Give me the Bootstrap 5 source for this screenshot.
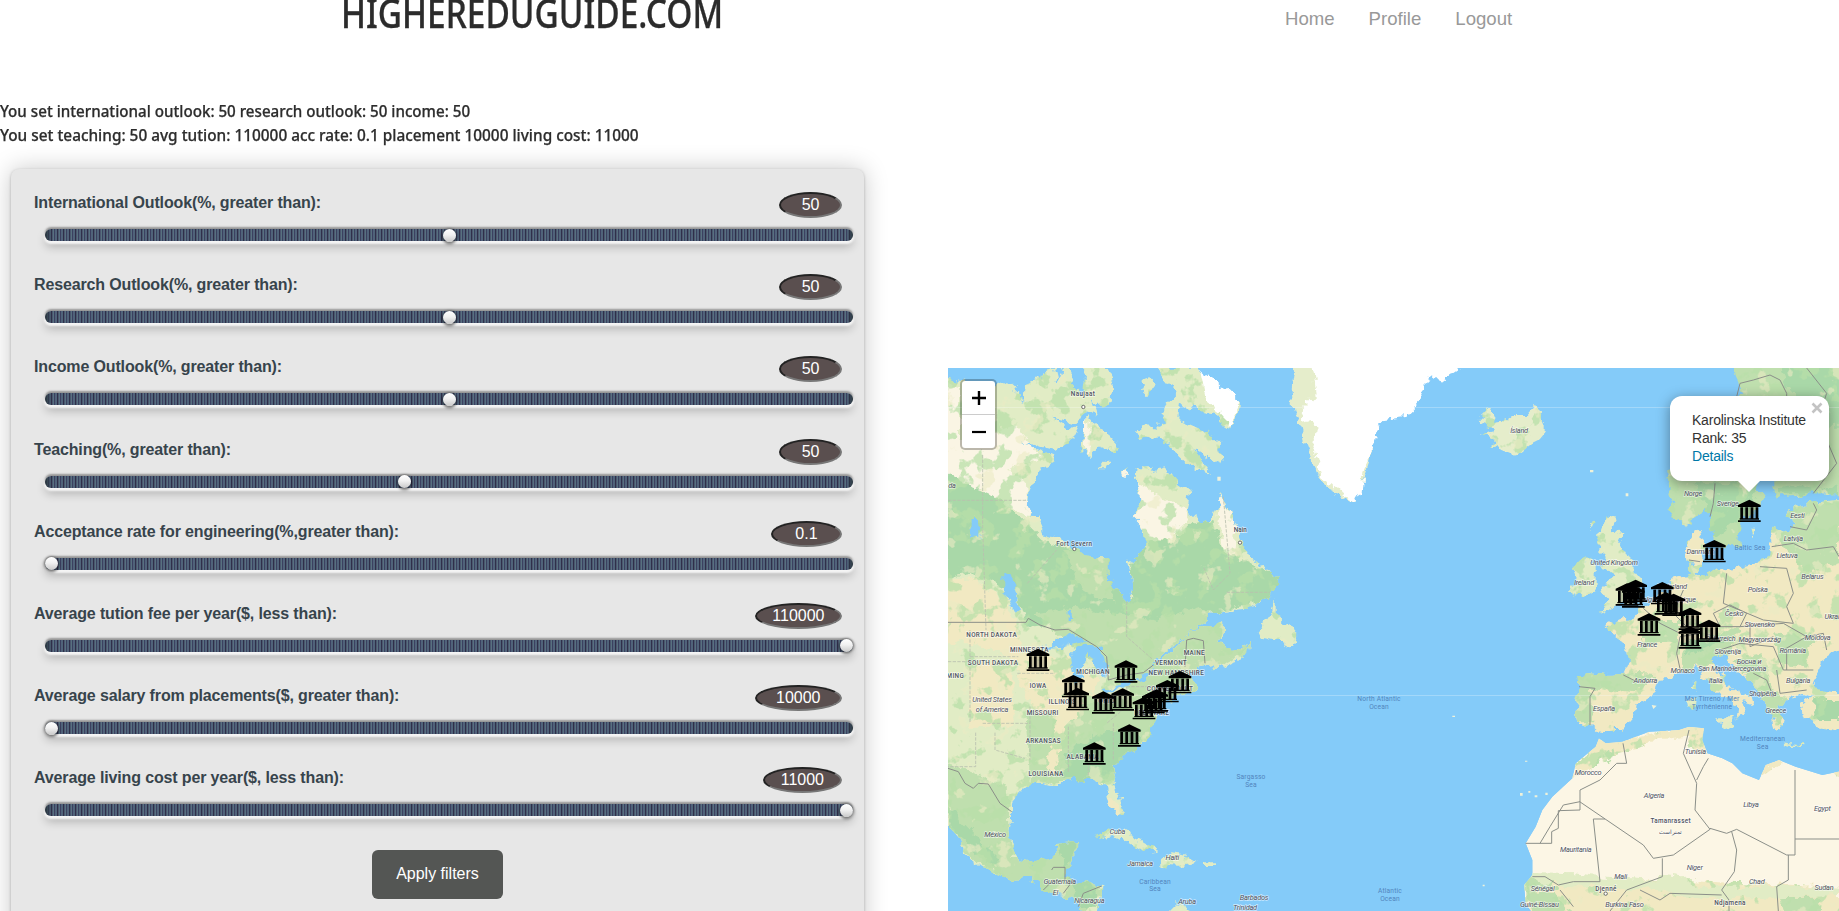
<!DOCTYPE html>
<html lang="en">
<head>
<meta charset="utf-8">
<meta name="viewport" content="width=device-width, initial-scale=1">
<title>HigherEduGuide.com</title>
<link href="https://cdn.jsdelivr.net/npm/bootstrap@5.3.0/dist/css/bootstrap.min.css" rel="stylesheet">
<style>
body{font-family:"Liberation Sans",Arial,sans-serif;color:#2d2d2d;background:#fff;overflow:hidden;height:911px}
.site-head{height:97px;padding-left:341px}
.brand{font:500 39px/56px "Noto Sans","Open Sans",sans-serif;width:382px;margin-top:-15px;white-space:nowrap;color:#2b2b2b;-webkit-text-stroke:.3px #2b2b2b}
.brand span,.status span{display:inline-block;transform-origin:0 50%;white-space:nowrap}
.main-nav{margin-left:562px;gap:34px;padding-top:5px;font-size:18.600px;line-height:27px}
.main-nav a{color:#999;text-decoration:none}
.status{font:500 16px/24px "Noto Sans","Open Sans",sans-serif;height:72px;padding-top:2px;-webkit-text-stroke:.25px #2d2d2d}
.filters{width:853px;height:780px;margin-left:11px;background:#e7e7e7;border-radius:8px;box-shadow:0 0 24px rgba(0,0,0,.22),0 1px 3px rgba(0,0,0,.25);padding:22px 11px 0 23px}
.filter-item{height:82.2px}
.filter-item label{font-weight:700;font-size:16px;line-height:24px;color:#37444c;letter-spacing:-.14px}
.val{background:#5a4f4f;color:#fff;border:2px inset #777;border-radius:50%;height:26px;line-height:22px;font-size:16px;padding:0 20.5px;margin-right:11px;margin-top:1px}
.slide{appearance:none;-webkit-appearance:none;display:block;width:808px;height:12px;margin:11px 0 0 11px;border-radius:6px;outline:0;
background:linear-gradient(90deg,#26323b,transparent 7px,transparent 802px,#26323b),repeating-linear-gradient(90deg,#2f3049 0 1px,#4b5770 1px 2px,#57717f 2px 3px,#3b4060 3px 4px,#50637a 4px 6px);
box-shadow:0 -2px 2px rgba(0,0,0,.35),0 2px 2px 1px #f5f5f5,0 6px 10px rgba(0,0,0,.22)}
.slide::-webkit-slider-thumb{-webkit-appearance:none;width:13px;height:13px;border-radius:50%;background:linear-gradient(#fff,#f1f1f1 45%,#c9c9c9);box-shadow:0 1px 3px 1px rgba(0,0,0,.55)}
.apply{width:131px;height:49px;background:#545654;color:#fff;border-radius:6px;border:0;font-size:16px;margin:1px 0 0 338px}
.map-box{width:891px;height:543px;margin:271px 0 0 84px;overflow:hidden;background:#84cbf9}
.zoomer{left:12px;top:11px;width:37px;border:2px solid rgba(0,0,0,.25);border-radius:5px;background:#fff;background-clip:padding-box}
.zoomer span{height:33px;display:flex;align-items:center;justify-content:center}
.zoomer span+span{border-top:1px solid #ccc;height:34px}
.pop{left:722px;top:28px;width:159px;height:85px;border-radius:12px;background:#fff;box-shadow:0 3px 14px rgba(0,0,0,.4);padding:15px 0 0 22px;font-size:14px;line-height:18px;color:#333;white-space:nowrap;letter-spacing:-.22px}
.pop a{color:#0078a8;text-decoration:none}
.pop::after{content:"";position:absolute;left:67px;top:84px;border:12px solid transparent;border-top-color:#fff;border-bottom:0}
.pop svg{right:6px;top:6px}
.map-box text{font-family:Roboto,sans-serif;text-anchor:middle;paint-order:stroke;stroke:#fff;stroke-opacity:.6;stroke-width:4px;fill:#4f5260}
.map-box .ctry text{font-size:22px;font-style:italic;font-weight:400;letter-spacing:-.7px}
.st{font-size:19px;letter-spacing:1px;font-weight:500}
.map-box .sea text{fill:#5285bd;stroke:none;font-size:20px;letter-spacing:.5px}
.bd{fill:none;stroke:#8b8f89;stroke-width:3}
.bd2{fill:none;stroke:#b9bfae;stroke-width:2.5;stroke-dasharray:10 4}
</style>
</head>
<body>
<header class="site-head d-flex align-items-start">
<div class="brand"><span id="brand">HIGHEREDUGUIDE.COM</span></div>
<nav class="main-nav d-flex"><a href="#">Home</a><a href="#">Profile</a><a href="#">Logout</a></nav>
</header>
<main class="d-flex align-items-start">
<section>
<div class="status"><div><span id="s1">You set international outlook: 50 research outlook: 50 income: 50</span></div><div><span id="s2">You set teaching: 50 avg tution: 110000 acc rate: 0.1 placement 10000 living cost: 11000</span></div></div>
<form class="filters">
<div class="filter-item"><div class="d-flex justify-content-between"><label>International Outlook(%, greater than):</label><span class="val">50</span></div><input class="slide" type="range" value="50"></div>
<div class="filter-item"><div class="d-flex justify-content-between"><label>Research Outlook(%, greater than):</label><span class="val">50</span></div><input class="slide" type="range" value="50"></div>
<div class="filter-item"><div class="d-flex justify-content-between"><label>Income Outlook(%, greater than):</label><span class="val">50</span></div><input class="slide" type="range" value="50"></div>
<div class="filter-item"><div class="d-flex justify-content-between"><label>Teaching(%, greater than):</label><span class="val">50</span></div><input class="slide" type="range" max="90" value="40"></div>
<div class="filter-item"><div class="d-flex justify-content-between"><label>Acceptance rate for engineering(%,greater than):</label><span class="val" style="padding:0 22.400px">0.1</span></div><input class="slide" type="range" value="0"></div>
<div class="filter-item"><div class="d-flex justify-content-between"><label>Average tution fee per year($, less than):</label><span class="val" style="padding:0 15.5px">110000</span></div><input class="slide" type="range" value="100"></div>
<div class="filter-item"><div class="d-flex justify-content-between"><label>Average salary from placements($, greater than):</label><span class="val" style="padding:0 19.500px">10000</span></div><input class="slide" type="range" value="0"></div>
<div class="filter-item"><div class="d-flex justify-content-between"><label>Average living cost per year($, less than):</label><span class="val" style="padding:0 16px">11000</span></div><input class="slide" type="range" value="100"></div>
<button class="apply" type="button">Apply filters</button>
</form>
</section>
<section class="map-box position-relative">
<svg width="891" height="543" viewBox="24 24 2673 1629" class="d-block">
<defs>
<filter id="rough" filterUnits="userSpaceOnUse" x="0" y="0" width="2720" height="1680" color-interpolation-filters="sRGB">
<feTurbulence type="fractalNoise" baseFrequency=".035" numOctaves="3" seed="4" result="n"/>
<feDisplacementMap in="SourceGraphic" in2="n" scale="36" xChannelSelector="R" yChannelSelector="G"/>
</filter>
<filter id="veg" filterUnits="userSpaceOnUse" x="0" y="0" width="2720" height="1680" color-interpolation-filters="sRGB">
<feTurbulence type="fractalNoise" baseFrequency=".035" numOctaves="3" seed="4" result="n"/>
<feDisplacementMap in="SourceGraphic" in2="n" scale="36" xChannelSelector="R" yChannelSelector="G" result="d"/>
<feTurbulence type="fractalNoise" baseFrequency=".018" numOctaves="4" seed="9" result="t"/>
<feColorMatrix in="t" values="0 0 0 0 .72  0 0 0 0 .875  0 0 0 0 .66  14 0 0 0 -7.9" result="g0"/>
<feComponentTransfer in="g0" result="g"><feFuncA type="linear" slope=".75"/></feComponentTransfer>
<feComposite in="g" in2="d" operator="atop" result="x"/>
<feColorMatrix in="t" values="0 0 0 0 .92  0 0 0 0 .92  0 0 0 0 .77  0 14 0 0 -9" result="s0"/>
<feComponentTransfer in="s0" result="s"><feFuncA type="linear" slope=".6"/></feComponentTransfer>
<feComposite in="s" in2="x" operator="atop"/>
</filter>
<clipPath id="na"><path d="M0 50L60 60 100 75 160 85 200 65 240 100 250 125 255 70 300 50 345 20 352 75 365 25 388 20 400 80 425 105 437 20 500 20 520 60 522 100 500 130 480 145 455 120 470 165 432 150 410 195 350 175 333 170 380 200 413 205 400 230 380 255 350 270 242 245 345 288 340 305 310 320 285 360 268 400 263 440 275 470 295 475 305 520 340 525 395 560 430 585 490 592 505 605 507 660 530 690 560 725 575 710 580 680 570 640 560 610 600 590 615 560 612 520 600 490 580 470 600 440 595 390 587 350 590 325 630 325 650 335 670 325 700 355 710 370 750 390 745 430 740 450 770 475 790 490 815 475 830 440 842 405 870 460 890 500 905 540 925 590 960 610 1000 640 1012 660 1010 690 980 715 935 745 880 750 820 755 790 785 730 835 690 865 640 915 600 940 650 915 710 855 770 805 850 785 848 820 835 850 880 870 930 850 925 875 880 905 820 937 815 912 780 920 750 940 760 955 775 985 740 998 690 1020 655 1040 642 1080 630 1130 600 1160 560 1180 530 1215 522 1250 530 1280 545 1320 545 1362 530 1365 510 1340 500 1310 495 1280 470 1255 430 1260 400 1250 360 1275 330 1275 290 1265 260 1275 225 1305 210 1340 210 1380 205 1420 215 1460 240 1500 280 1510 320 1500 345 1485 350 1455 390 1450 417 1450 405 1480 395 1510 380 1530 375 1550 400 1560 440 1565 487 1578 485 1610 475 1660 430 1660 400 1610 350 1605 310 1585 270 1555 220 1560 170 1545 120 1520 70 1480 60 1440 0 1375Z"/></clipPath>
<clipPath id="af"><path id="afp" d="M1977 1135L1997 1150 2047 1145 2127 1115 2217 1110 2247 1100 2292 1105 2287 1140 2302 1180 2347 1195 2377 1210 2407 1240 2457 1260 2477 1215 2517 1200 2567 1220 2647 1245 2720 1230V1680H1792L1757 1630 1752 1575 1777 1545 1777 1500 1757 1450 1787 1400 1807 1350 1837 1310 1897 1255 1907 1210 1967 1160Z"/></clipPath>
<clipPath id="eu"><path d="M2720 415L2620 425 2560 440 2540 460 2560 490 2550 520 2515 505 2500 520 2490 545 2495 580 2470 600 2427 615 2357 635 2330 622 2300 645 2272 640 2290 600 2292 545 2282 510 2257 525 2242 550 2247 600 2257 640 2197 655 2187 690 2147 715 2107 740 2082 770 2052 775 1997 800 2002 815 2047 840 2062 870 2067 910 2052 943 1997 945 1937 938 1912 950 1917 980 1907 1060 1917 1100 1952 1100 1977 1122 2007 1110 2047 1110 2077 1075 2087 1035 2147 995 2157 950 2207 945 2237 930 2277 925 2287 950 2327 990 2377 1025 2397 1055 2392 1082 2417 1050 2407 1025 2437 1035 2432 1015 2367 980 2332 930 2322 895 2347 885 2377 920 2427 960 2457 990 2467 1025 2497 1070 2502 1100 2522 1110 2537 1085 2512 1045 2547 1010 2587 1005 2617 1010 2587 1030 2597 1075 2627 1100 2720 1115V1000L2637 990 2617 965 2632 940 2647 900 2720 850Z"/></clipPath>
<g id="uni"><path d="M0-34L34-18V-12H-34V-18ZM-27-11H-19V23H-27ZM-12-11H-4V23H-12ZM4-11H12V23H4ZM19-11H27V23H19ZM-29 22H29V26H-29ZM-34 28H34V33H-34Z"/><path d="M-26-12H26V24H-26Z" opacity=".18"/></g>
</defs>
<!-- North America -->
<g filter="url(#veg)"><g clip-path="url(#na)">
<path fill="#e1ecc5" d="M0 0H1100V1680H0Z"/>
<path fill="#faf5e4" d="M0 230L100 250 230 195 280 260 300 290 200 330 260 370 270 470 150 410 0 370ZM0 60L60 80 60 240 0 240ZM590 370L650 400 740 450 740 490 690 540 615 540 570 470ZM835 400L890 500 880 600 850 580 830 470Z"/>
<path fill="#a9d8a8" d="M0 320L60 365 130 390 200 440 250 480 310 540 400 570 520 600 540 700 580 720 570 610 630 540 700 545 760 490 820 480 850 580 890 590 1020 650 1000 720 800 760 640 900 560 850 480 820 400 790 260 800 230 700 100 640 0 660Z"/>
<path fill="#bfdfae" d="M370 570L500 590 520 720 480 720 420 680ZM280 760L400 740 650 780 780 740 860 800 940 850 820 940 750 1000 640 1060 450 900ZM260 1060L640 1000 650 1120 540 1200 520 1260 270 1270ZM0 1200L200 1280 210 1500 420 1440 490 1600 430 1660 200 1560 60 1470Z"/>
<path fill="#f1e9c2" d="M0 660L95 655 200 720 235 810 250 880 400 900 480 960 450 1010 380 1090 340 1250 320 1250 350 1080 270 1040 220 900 100 850 0 850ZM490 1320L510 1310 545 1350 530 1365ZM90 910H220V1100H90Z"/>
<path fill="#a9d8a8" d="M380 1180L500 1110 600 1110 600 1160 520 1230 480 1270 370 1250ZM24 1340L120 1440 180 1500 160 1520 24 1400ZM350 1450L410 1450 380 1540 470 1580 480 1640 420 1640Z"/></g>
<g fill="#e1ecc5"><path d="M440 170L455 190 510 230 540 265 525 278 480 262 450 292 435 270 412 272 430 240ZM650 20H770L830 80 870 105 905 130 885 175 865 208 835 190 830 160 780 150 760 130 740 150 720 120 715 180 740 190 800 215 820 225 840 260 845 310 800 290 765 270 815 345 740 310 690 260 650 225 600 240 585 215 610 195 660 200 675 190 660 160 705 105 690 70ZM605 60L630 50 645 70 635 95 620 105 605 90ZM475 325L490 305 510 305 500 325ZM1010 715L985 770 950 815 960 835 1010 845 1060 860 1072 830 1060 800 1030 785 1010 765ZM465 1435L500 1412 550 1415 600 1440 655 1472 610 1475 570 1450 520 1425ZM660 1515L690 1480 735 1485 770 1505 710 1520ZM575 1508H630V1518H575ZM795 1507H825V1518H795ZM680 1660L710 1630 770 1660Z"/></g>
<path fill="#faf5e4" d="M545 335L560 325 562 345 552 355ZM435 180L455 200 450 290 435 265Z"/>
</g>
<g filter="url(#rough)">
<path fill="#84cbf9" d="M390 890L430 850 480 860 500 920 490 960 470 920 440 870 425 960 405 980ZM490 990L600 950 640 925 640 945 560 975 500 1000ZM190 640L215 650 240 740 225 760 190 690ZM380 750H395V780H380ZM300 865L400 820 440 840 370 860ZM95 480H115V530H95Z"/>
<path fill="#fff" d="M780 24L830 65 900 125 870 195 840 160 800 130Z"/>
<path fill="#e5edcb" d="M1065 0L1055 90 1060 150 1085 200 1090 240 1110 290 1140 350 1165 385 1245 425 1300 270 1140 20Z"/>
<path fill="#fff" d="M1115 0L1130 100 1075 160 1130 200 1120 260 1145 350 1180 380 1245 425 1265 395 1270 330 1300 270 1310 210 1330 180 1400 170 1435 130 1450 90 1470 50 1510 60 1600 0Z"/>
</g>
<!-- Europe -->
<g filter="url(#veg)">
<path fill="#e5edcb" d="M1617 185L1647 150 1670 165 1665 185 1700 180 1720 165 1760 165 1777 145 1795 150 1820 190 1820 215 1800 240 1770 255 1745 275 1720 282 1690 270 1650 262 1670 240 1625 218 1660 210 1630 190Z"/>
<path fill="#bfdfae" d="M2377 0L2390 60 2410 100 2300 200 2190 340 2185 390 2200 430 2190 450 2200 475 2232 493 2277 470 2300 440 2312 490 2322 540 2347 565 2397 560 2402 500 2407 470 2450 455 2470 410 2440 370 2440 300 2480 200 2520 180 2500 340 2500 380 2510 410 2620 400 2720 400V0Z"/>
<path fill="#a9d8a8" d="M2510 0H2720V200H2660L2540 80ZM2260 370L2450 370 2440 440 2320 540 2300 440ZM2520 380H2697V400H2520Z"/>
<path fill="#e1ecc5" d="M1982 500L1997 475 2027 480 2012 510 2047 515 2037 555 2052 570 2082 635 2107 665 2107 700 2077 730 2037 735 1982 755 2007 720 1987 695 2017 650 1992 620 1997 590 1967 560 1977 530ZM1892 625L1937 590 1967 615 1967 680 1922 710 1887 695 1907 660ZM1950 490L1965 485 1955 510ZM2435 500H2450L2440 530ZM2260 970L2270 960 2265 995 2255 985ZM2247 1015L2270 1010 2262 1050 2250 1045ZM2325 1075L2385 1075 2370 1105ZM2540 1145L2590 1150V1156L2540 1150Z"/>
<g clip-path="url(#eu)"><path fill="#f1e9c2" d="M1880 380H2720V1160H1880Z"/>
<path fill="#bfdfae" d="M2480 400H2697V610L2600 640 2500 520ZM1900 930L2150 945 2080 1000 1950 980 1960 1090 1910 1090ZM2220 880L2400 800 2360 900 2230 930ZM2380 900L2470 880 2500 1000 2440 980ZM2500 820L2620 830 2600 920 2520 910ZM2100 780H2220V840H2100ZM2440 990L2540 1000 2520 1100Z"/>
<path fill="#a9d8a8" d="M2230 850L2340 820 2350 840 2240 890ZM2620 1020H2700V1080H2620Z"/></g>
<path fill="#f1e9c2" d="M2200 660L2420 640 2420 670 2240 700Z"/>
</g>
<g clip-path="url(#af)"><use href="#afp" fill="#fcf6e5"/>
<g filter="url(#veg)"><path fill="#f1e9c2" d="M1970 1130L2050 1140 2220 1100 2300 1090 2310 1170 2270 1190 2240 1130 2130 1140 2120 1160 1990 1190 1930 1240 1890 1250ZM2460 1250L2470 1200 2530 1195 2510 1215ZM2620 1230H2720V1290L2690 1240ZM1750 1540L1900 1570 2150 1560 2700 1580V1680H1750Z"/>
<path fill="#bfdfae" d="M1970 1200L2020 1165 2000 1200 1950 1220ZM1750 1590L1850 1600 1900 1680H1790ZM2520 1610H2640V1680H2540ZM1760 1550L1830 1540 1850 1590H1760Z"/></g>
<path filter="url(#rough)" fill="#e1ecc5" d="M1750 1535L1900 1540 2150 1565 2180 1540 2220 1545 2260 1580 2697 1580V1605L2300 1620 2150 1590 1800 1570Z"/></g>
<path fill="#fff" opacity=".25" d="M24 141H2697V144H24ZM480 1005H2697V1008H480Z"/>
<g fill="#eff2da"><path d="M1765 1293h6v5h-6zM1740 1299h8v8h-8zM1784 1306h8v6h-8zM1816 1298h7v7h-7zM1537 1067h8v4h-8zM1755 1202h7v3h-7zM1628 1574h6v5h-6zM2135 1035L2150 1037 2140 1047ZM1950 330h10v7h-10zM2057 400h8v9h-8zM832 350h10v12h-10z"/></g>
<!-- borders -->
<path class="bd2" d="M128 285V500L138 810M24 421H262M560 725V830L640 900M262 670L350 570M90 810V1090M24 905H90M90 890H235M128 1090H270M107 1118V1220H24M165 1118V1170L255 1195M232 940H345M270 1040V1200M385 1100V1240M445 1180V1250M520 1090V1200M560 980H700M560 980V1040L500 1090M700 930V990M850 410L870 640 820 690 790 620M860 697H990"/>
<path class="bd" d="M24 787H258L265 775 300 795 345 810 385 808 470 860 500 890 505 960 560 945 610 938 640 915M735 920L740 840 760 835 790 842 795 910M24 1225L55 1235 75 1270 100 1285 115 1270 145 1272 180 1330 215 1355M335 1530L340 1522H375V1560M310 1590L340 1560M370 1600L400 1560M415 1640L430 1600 485 1578"/>
<g class="bd"><path d="M2390 110L2400 70 2440 60 2490 45 2520 60 2540 100V130M2600 24L2660 100 2650 130M2660 240L2690 310 2620 400M2325 370L2320 430 2310 470M2550 500L2600 510 2630 450 2620 430M2495 560L2560 550 2600 570 2680 560 2697 590M2460 620L2540 625 2560 700M2560 700L2540 740 2560 790 2470 780 2350 730 2360 640M2247 600L2280 605M2230 690L2200 760 2240 800M2320 760L2370 735 2420 760 2400 800 2340 800ZM2400 800L2530 790 2600 830 2650 820 2660 870M2430 790V860L2500 830M2340 870L2400 850 2500 860 2530 930 2620 930M2510 930L2520 1000 2600 990M2440 940L2480 960 2500 1010 2460 1000M2050 945L2090 965 2147 965M2222 935L2210 880 2220 830 2280 820M1917 980L1965 985 1950 1010 1950 1095M2110 745L2160 790 2220 820M2530 870L2600 830M2540 870V930"/>
<path d="M2049 1150L2060 1210H2030L1980 1260 1920 1290V1350L1855 1352V1405L1835 1415V1450H1757M1919 1325L2110 1455 2140 1495 2200 1485 2310 1408 2265 1350 2270 1270 2230 1180 2247 1110M2270 1260L2290 1220 2305 1195M2310 1405L2360 1420 2390 1408 2540 1485H2565V1230M2375 1415L2390 1470 2383 1535 2345 1590 2367 1620V1653M2545 1485V1560L2510 1580 2515 1653M1995 1377H1960L1980 1565H1900L1855 1575 1815 1550 1777 1550M2167 1495V1550L2100 1575 2060 1590 2010 1653M2100 1590L2160 1620 2190 1600 2345 1605M1860 1590L1900 1640M2565 1437H2697M1920 1325L1870 1335 1830 1400 1800 1450"/></g>
<g class="sea"><text x="1317" y="1022">North Atlantic</text><text x="1317" y="1046">Ocean</text><text x="933" y="1257">Sargasso</text><text x="933" y="1282">Sea</text><text x="645" y="1571">Caribbean</text><text x="645" y="1594">Sea</text><text x="1350" y="1599">Atlantic</text><text x="1350" y="1622">Ocean</text><text x="2430" y="570">Baltic Sea</text><text x="2316" y="1023">Mar Tirreno / Mer</text><text x="2316" y="1047">Tyrrhénienne</text><text x="2468" y="1143">Mediterranean</text><text x="2468" y="1168">Sea</text></g>
<g class="st"><text x="429" y="109">Naujaat</text><text x="901" y="515" letter-spacing="0">Nain</text><text x="403" y="558">Fort Severn</text><text x="155" y="831">NORTH DAKOTA</text><text x="268" y="877">MINNESOTA</text><text x="159" y="914">SOUTH DAKOTA</text><text x="46" y="953">MING</text><text x="294" y="985">IOWA</text><text x="459" y="941">MICHIGAN</text><text x="367" y="1032">ILLINOIS</text><text x="308" y="1064">MISSOURI</text><text x="763" y="884">MAINE</text><text x="693" y="914">VERMONT</text><text x="709" y="945">NEW HAMPSHIRE</text><text x="690" y="992">CONNECTICUT</text><text x="500" y="1028">OHIO</text><text x="635" y="1066">DELAWARE</text><text x="310" y="1150">ARKANSAS</text><text x="428" y="1196">ALABAMA</text><text x="318" y="1249">LOUISIANA</text><text x="2192" y="1388">Tamanrasset</text><text x="2192" y="1421">تمنراست</text><text x="1998" y="1593">Djenné</text><text x="2370" y="1635">Ndjamena</text></g>
<g fill="#fff" stroke="#555" stroke-width="2.5"><circle cx="430" cy="141" r="5"/><circle cx="900" cy="548" r="5"/><circle cx="403" cy="567" r="5"/><circle cx="1997" cy="1601" r="5"/></g>
<g class="ctry"><text x="36" y="384">da</text><text x="156" y="1025">United States</text><text x="156" y="1055">of America</text><text x="165" y="1431">México</text><text x="532" y="1421">Cuba</text><text x="697" y="1500">Haiti</text><text x="600" y="1519">Jamaica</text><text x="359" y="1571">Guatemala</text><text x="346" y="1606">El</text><text x="448" y="1630">Nicaragua</text><text x="741" y="1632">Aruba</text><text x="942" y="1619">Barbados</text><text x="915" y="1651">Trinidad</text>
<text x="1737" y="219">Ísland</text><text x="2259" y="407">Norge</text><text x="2363" y="438">Sverige</text><text x="2572" y="473">Eesti</text><text x="2560" y="542">Latvija</text><text x="2541" y="594">Lietuva</text><text x="2617" y="657">Belarus</text><text x="2453" y="695">Polska</text><text x="2280" y="583">Danmark</text><text x="2022" y="615">United Kingdom</text><text x="1932" y="675">Ireland</text><text x="2195" y="686">Nederland</text><text x="2182" y="727">Belgique / Belgique</text><text x="2382" y="768">Česko</text><text x="2459" y="800">Slovensko</text><text x="2676" y="778">Ukrai</text><text x="2341" y="843">Österreich</text><text x="2459" y="845">Magyarország</text><text x="2633" y="841">Moldova</text><text x="2558" y="878">România</text><text x="2363" y="882">Slovenija</text><text x="2427" y="912">Босна и</text><text x="2423" y="934">Hercegovina</text><text x="2121" y="860">France</text><text x="2228" y="939">Monaco</text><text x="2325" y="933">San Marino</text><text x="2327" y="968">Italia</text><text x="2116" y="970">Andorra</text><text x="1992" y="1053">España</text><text x="2574" y="968">Bulgaria</text><text x="2468" y="1009">Shqipëria</text><text x="2507" y="1060">Greece</text><text x="2266" y="1183">Tunisia</text><text x="1944" y="1244">Morocco</text><text x="2142" y="1314">Algeria</text><text x="2433" y="1340">Libya</text><text x="2647" y="1352">Egypt</text><text x="1907" y="1477">Mauritania</text><text x="2042" y="1556">Mali</text><text x="2264" y="1529">Niger</text><text x="2450" y="1571">Chad</text><text x="2652" y="1591">Sudan</text><text x="1808" y="1593">Sénégal</text><text x="1798" y="1640">Guiné-Bissau</text><text x="2053" y="1640">Burkina Faso</text></g>
<g><use href="#uni" x="294" y="900"/><use href="#uni" x="400" y="979"/><use href="#uni" x="413" y="1018"/><use href="#uni" x="490" y="1028"/><use href="#uni" x="548" y="1019"/><use href="#uni" x="558" y="935"/><use href="#uni" x="720" y="967"/><use href="#uni" x="682" y="994"/><use href="#uni" x="650" y="1022"/><use href="#uni" x="640" y="1027"/><use href="#uni" x="612" y="1045"/><use href="#uni" x="568" y="1127"/><use href="#uni" x="463" y="1181"/>
<use href="#uni" x="2428" y="453"/><use href="#uni" x="2323" y="574"/><use href="#uni" x="2087" y="693"/><use href="#uni" x="2061" y="704"/><use href="#uni" x="2080" y="710"/><use href="#uni" x="2167" y="700"/><use href="#uni" x="2178" y="731"/><use href="#uni" x="2201" y="735"/><use href="#uni" x="2250" y="777"/><use href="#uni" x="2250" y="833"/><use href="#uni" x="2307" y="813"/><use href="#uni" x="2127" y="794"/></g>
</svg>
<div class="zoomer position-absolute"><span><svg width="14" height="14"><path d="M7 0V14M0 7H14" stroke="#000" stroke-width="2.4"/></svg></span><span><svg width="14" height="14"><path d="M0 7H14" stroke="#000" stroke-width="2.2"/></svg></span></div>
<div class="pop position-absolute">Karolinska Institute<br>Rank: 35<br><a href="#">Details</a><svg class="position-absolute" width="12" height="12"><path d="M1.500 1.500L10.500 10.500M10.500 1.500L1.500 10.500" stroke="#c3c3c3" stroke-width="2.600"/></svg></div>
</section>
</main>
<script src="https://cdn.jsdelivr.net/npm/bootstrap@5.3.0/dist/js/bootstrap.bundle.min.js"></script>
<script>
[['brand',382],['s1',470],['s2',639]].forEach(function(p){var e=document.getElementById(p[0]);e.style.transform='scaleX('+p[1]/e.offsetWidth+')';});
</script>
</body>
</html>
